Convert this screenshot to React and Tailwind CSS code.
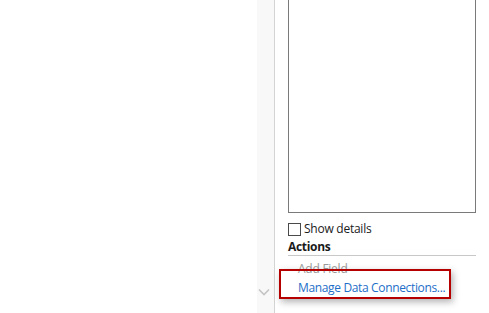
export default function App() {
  const font = { fontFamily: '"Segoe UI", "Open Sans", "Noto Sans", sans-serif' };
  return (
    <div className="w-[489px] h-[313px] bg-white flex overflow-hidden relative" style={font}>
      <div className="w-[257px] h-full bg-white" />
      <div className="w-[18px] h-full bg-[#f8f8f8] border-r border-[#d4d4d4] flex flex-col justify-end items-center pb-[17px]">
        <svg width="12" height="8" viewBox="0 0 12 8" className="mr-[3px]">
          <path d="M1 1.5 L6 6.5 L11 1.5" fill="none" stroke="#c4c4c4" strokeWidth="1.6" />
        </svg>
      </div>
      <div className="flex-1 pl-[13px] flex flex-col">
        <div className="w-[188px] h-[213px] border-x border-b border-[#7a7a7a] bg-white" />
        <div className="flex items-center h-[14px] mt-[9px]">
          <div className="w-[13px] h-[13px] border border-[#4a4a4a] bg-white" />
          <span className="ml-[3px] text-[12px] leading-[14px] text-[#1a1a1a] tracking-[-0.25px]">Show details</span>
        </div>
        <div className="w-[188px] mt-[3px] border-b border-[#c8c8c8] h-[17px] flex items-end">
          <span className="text-[12px] leading-[16px] font-bold text-[#1a1a1a] tracking-[-0.3px]">Actions</span>
        </div>
        <div className="pl-[10px] mt-[5px] h-[16px] text-[12px] leading-[16px] text-[#9a9a9a] tracking-[-0.25px]">Add Field</div>
        <div className="pl-[10px] mt-[3px] h-[16px] text-[12px] leading-[16px] text-[#1c6ec8] tracking-[-0.35px]">Manage Data Connections...</div>
      </div>
      <div className="absolute left-[279px] top-[269px] w-[172px] h-[30px] border-2 border-[#b50000] shadow-[2px_3px_7px_rgba(0,0,0,0.3)]" />
    </div>
  );
}
